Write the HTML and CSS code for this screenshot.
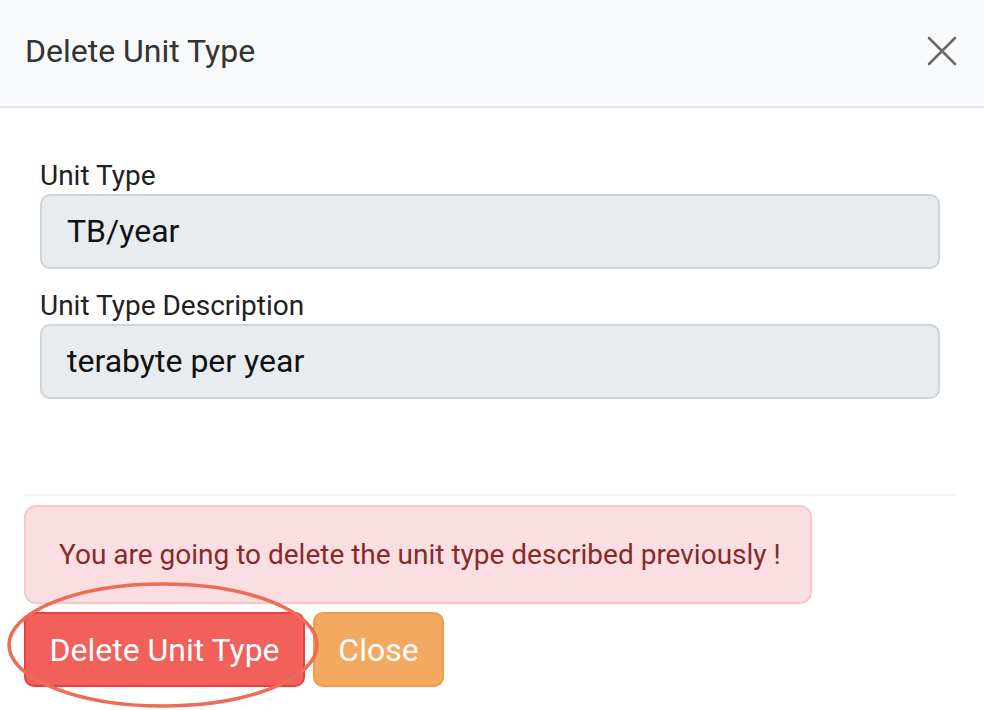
FILE: index.html
```html
<!DOCTYPE html>
<html>
<head>
<meta charset="utf-8">
<link rel="stylesheet" href="styles.css">
</head>
<body>
<div class="modal">
  <div class="modal-header">
    <h5 class="modal-title">Delete Unit Type</h5>
    <button class="btn-close" aria-label="Close">
      <svg width="30" height="30" viewBox="0 0 30 30"><path d="M2 2 L28 28 M28 2 L2 28" stroke="#6b6b6b" stroke-width="2.6" stroke-linecap="round" fill="none"/></svg>
    </button>
  </div>
  <div class="modal-body">
    <label class="form-label">Unit Type</label>
    <div class="form-control">TB/year</div>
    <label class="form-label">Unit Type Description</label>
    <div class="form-control">terabyte per year</div>
  </div>
  <div class="modal-footer">
    <div class="alert">You are going to delete the unit type described previously !</div>
    <div class="actions">
      <button class="btn btn-danger">Delete Unit Type</button>
      <button class="btn btn-warning">Close</button>
      <svg class="highlight" width="320" height="132" viewBox="0 0 320 132"><ellipse cx="158" cy="64" rx="154" ry="61" fill="none" stroke="#ee6b58" stroke-width="3.6"/></svg>
    </div>
  </div>
</div>
</body>
</html>
```
FILE: styles.css
```css
* { box-sizing: border-box; }
html, body { margin: 0; padding: 0; background: #fff; }
body { font-family: Roboto, "Liberation Sans", Arial, sans-serif; color: #212529; }
.modal { width: 984px; height: 710px; overflow: hidden; }
.modal-header {
  height: 108px;
  background: #f8f9fa;
  border-bottom: 2px solid #dee2e6;
  display: flex;
  align-items: center;
  justify-content: space-between;
  padding: 0 27px 4px 25px;
}
.modal-title { margin: 0; font-size: 32px; font-weight: 400; color: #333; }
.btn-close { background: none; border: 0; padding: 0; width: 30px; height: 30px; display: flex; }
.modal-body { padding: 53px 44px 0 40px; display: flex; flex-direction: column; }
.form-label { font-size: 28px; line-height: 30px; color: #222; margin-bottom: 3px; }
.form-control {
  height: 75px;
  background: #e9ecef;
  border: 2px solid #ced4da;
  border-radius: 10px;
  padding: 0 25px;
  font-size: 32px;
  line-height: 71px;
  color: #111;
  margin-bottom: 22px;
}
.modal-footer {
  margin: 73px 28px 0 24px;
  border-top: 2px solid #f3f3f3;
  padding-top: 9px;
}
.alert {
  width: 788px;
  height: 99px;
  background: #fbdee1;
  border: 2px solid #f6c7cc;
  border-radius: 12px;
  color: #862a2b;
  font-size: 28px;
  white-space: nowrap;
  display: flex;
  align-items: center;
  padding: 0 0 0 33px;
}
.actions { position: relative; display: flex; gap: 8px; margin-top: 8px; }
.btn {
  height: 75px;
  border-radius: 10px;
  font-family: inherit;
  font-size: 32px;
  color: #fff;
  padding: 0;
}
.btn-danger { width: 281px; background: #f1605b; border: 2px solid #e8413d; }
.btn-warning { width: 131px; background: #f4a963; border: 2px solid #f19b45; }
.highlight { position: absolute; left: -19px; top: -31px; pointer-events: none; }
```
